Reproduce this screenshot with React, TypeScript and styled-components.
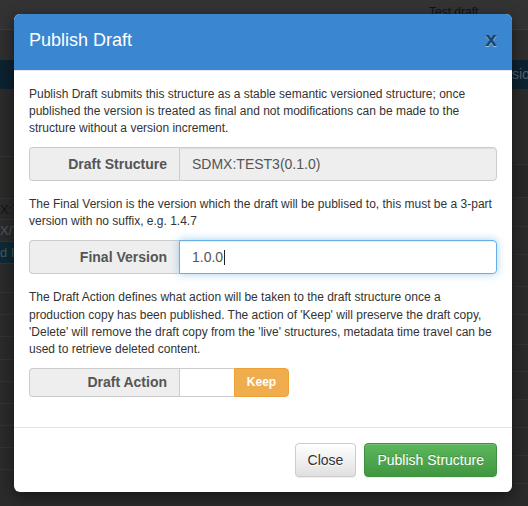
import React from "react";
import styled, { createGlobalStyle } from "styled-components";

const GlobalStyle = createGlobalStyle`
  html, body {
    margin: 0;
    padding: 0;
  }
  body {
    width: 528px;
    height: 506px;
    overflow: hidden;
    background: #2b2b2b;
    font-family: "Liberation Sans", Arial, sans-serif;
  }
  * {
    box-sizing: border-box;
  }
`;

/* ---------- page behind the dialog (already dimmed by the backdrop) ---------- */

const Page = styled.div`
  position: relative;
  width: 528px;
  height: 506px;
  overflow: hidden;
  background: #2b2b2b;
`;

const TopBar = styled.div`
  height: 30px;
  padding: 5px 0 0 429px;
  background: #333333;
  border-bottom: 1px solid #3d3d3d;
  font-size: 12px;
  color: #121212;
`;

const SubBar = styled.div`
  height: 30px;
  background: #2f2f2f;
`;

const HeadBand = styled.div`
  height: 29px;
  display: flex;
  justify-content: flex-end;
  background: #0c2230;
`;

const BandCell = styled.div`
  width: 16px;
  overflow: hidden;
  color: #52616d;
  font-size: 14px;
  line-height: 29px;
  white-space: nowrap;
`;

const Columns = styled.div`
  display: flex;
  justify-content: space-between;
`;

const Column = styled.div`
  width: 14px;
  overflow: hidden;
  display: flex;
  flex-direction: column;
`;

const BgRow = styled.div<{ $h: number; $tint?: string }>`
  height: ${(p) => p.$h}px;
  background: ${(p) => p.$tint || "transparent"};
  border-bottom: 1px solid #343434;
  display: flex;
  align-items: center;
  font-size: 13px;
  white-space: nowrap;
  overflow: hidden;
`;

const CutText = styled.span<{ $color: string; $shift: number }>`
  margin-left: ${(p) => p.$shift}px;
  color: ${(p) => p.$color};
`;

const BgBadge = styled.div`
  align-self: stretch;
  flex: 1;
  display: flex;
  align-items: center;
  background: #0f2a36;
`;

/* ---------- dialog ---------- */

const Modal = styled.div`
  position: absolute;
  top: 14px;
  left: 14px;
  width: 498px;
  background: #ffffff;
  border-radius: 6px;
  box-shadow: 0 5px 15px rgba(0, 0, 0, 0.5);
  overflow: hidden;
`;

const Header = styled.div`
  display: flex;
  justify-content: space-between;
  align-items: flex-start;
  padding: 14px 15px 16px;
  background: #3a86d0;
  border-bottom: 1px solid #e5e5e5;
`;

const Title = styled.h4`
  margin: 0;
  font-size: 18px;
  font-weight: normal;
  line-height: 1.42857;
  color: #ffffff;
`;

const CloseX = styled.button`
  padding: 0;
  border: 0;
  background: none;
  font-family: "Liberation Sans", Arial, sans-serif;
  font-size: 21px;
  font-weight: bold;
  line-height: 1;
  color: #000000;
  opacity: 0.5;
  text-shadow: 0 1px 0 #ffffff;
  cursor: pointer;
`;

const Body = styled.div`
  padding: 15px;
  font-size: 12px;
  line-height: 1.42857;
  color: #333333;
`;

const Para = styled.p`
  margin: 0 0 10px;
`;

const FormGroup = styled.div`
  display: flex;
  margin-bottom: 15px;
`;

const Addon = styled.div<{ $small?: boolean }>`
  width: 150px;
  flex: none;
  display: flex;
  align-items: center;
  justify-content: flex-end;
  padding: ${(p) => (p.$small ? "4px 12px" : "6px 12px")};
  font-size: 14px;
  font-weight: bold;
  line-height: ${(p) => (p.$small ? "19px" : "20px")};
  color: #555555;
  background: #eeeeee;
  border: 1px solid #cccccc;
  border-right: 0;
  border-radius: 4px 0 0 4px;
`;

const Field = styled.div<{ $focused?: boolean }>`
  flex: 1;
  display: flex;
  align-items: center;
  padding: 6px 12px;
  font-size: 14px;
  line-height: 20px;
  color: #555555;
  background: ${(p) => (p.$focused ? "#ffffff" : "#eeeeee")};
  border: 1px solid ${(p) => (p.$focused ? "#66afe9" : "#cccccc")};
  border-radius: 0 4px 4px 0;
  box-shadow: ${(p) =>
    p.$focused
      ? "inset 0 1px 1px rgba(0,0,0,.075), 0 0 8px rgba(102,175,233,.6)"
      : "inset 0 1px 1px rgba(0,0,0,.075)"};
`;

const Caret = styled.span`
  display: inline-block;
  width: 1px;
  height: 15px;
  margin-left: 1px;
  background: #222222;
`;

const Toggle = styled.div`
  display: flex;
  width: 110px;
  height: 29px;
`;

const ToggleBlank = styled.div`
  flex: 1;
  background: #ffffff;
  border: 1px solid #cccccc;
  border-right: 0;
`;

const ToggleKeep = styled.div`
  width: 55px;
  display: flex;
  align-items: center;
  justify-content: center;
  font-size: 12px;
  font-weight: bold;
  color: #ffffff;
  background: #f0ad4e;
  border: 1px solid #eea236;
  border-radius: 0 4px 4px 0;
`;

const Footer = styled.div`
  display: flex;
  justify-content: flex-end;
  gap: 8px;
  padding: 15px;
  border-top: 1px solid #e5e5e5;
`;

const Button = styled.button<{ $variant: "default" | "success" }>`
  height: 34px;
  padding: 6px 12px;
  font-family: "Liberation Sans", Arial, sans-serif;
  font-size: 14px;
  line-height: 20px;
  border-radius: 4px;
  cursor: pointer;
  border: 1px solid
    ${(p) => (p.$variant === "success" ? "#3e8f3e" : "#cccccc")};
  color: ${(p) => (p.$variant === "success" ? "#ffffff" : "#333333")};
  background-image: ${(p) =>
    p.$variant === "success"
      ? "linear-gradient(to bottom, #5cb85c 0, #419641 100%)"
      : "linear-gradient(to bottom, #ffffff 0, #e0e0e0 100%)"};
  text-shadow: ${(p) =>
    p.$variant === "success" ? "0 -1px 0 rgba(0,0,0,.2)" : "0 1px 0 #fff"};
  box-shadow: inset 0 1px 0 rgba(255, 255, 255, 0.15),
    0 1px 1px rgba(0, 0, 0, 0.075);
`;

type BgRowData = {
  h: number;
  tint?: string;
  text?: string;
  color?: string;
  shift?: number;
  badge?: boolean;
};

const leftRows: BgRowData[] = [
  { h: 68 },
  { h: 42, tint: "#2a2c29" },
  { h: 21, text: "SDMX:TEST3", color: "#141414", shift: -29 },
  { h: 22, text: "SDMX/TEST3", color: "#4b5663", shift: -29 },
  { h: 22, text: "Add Item", color: "#3e5a66", shift: -16, badge: true },
  { h: 29 },
  { h: 22 },
  { h: 22 },
  { h: 23 },
  { h: 22 },
  { h: 22 },
  { h: 22 },
  { h: 22 },
  { h: 22 },
];

const rightRows: BgRowData[] = [
  { h: 76 },
  { h: 33, tint: "#282828" },
  { h: 29 },
  { h: 28 },
  { h: 32 },
  { h: 28 },
  { h: 30 },
  { h: 27 },
  { h: 28 },
  { h: 28 },
  { h: 28 },
  { h: 28 },
];

const App = () => {
  return (
    <>
      <GlobalStyle />
      <Page>
        <TopBar>Test draft</TopBar>
        <SubBar />
        <HeadBand>
          <BandCell>sion</BandCell>
        </HeadBand>
        <Columns>
          <Column>
            {leftRows.map((row, index) => {
              const label = row.text && (
                <CutText $color={row.color!} $shift={row.shift!}>
                  {row.text}
                </CutText>
              );
              return (
                <BgRow key={index} $h={row.h} $tint={row.tint}>
                  {row.badge ? <BgBadge>{label}</BgBadge> : label}
                </BgRow>
              );
            })}
          </Column>
          <Column>
            {rightRows.map((row, index) => (
              <BgRow key={index} $h={row.h} $tint={row.tint} />
            ))}
          </Column>
        </Columns>

        <Modal>
          <Header>
            <Title>Publish Draft</Title>
            <CloseX>x</CloseX>
          </Header>
          <Body>
            <Para>
              Publish Draft submits this structure as a stable semantic
              versioned structure; once published the version is treated as
              final and not modifications can be made to the structure without
              a version increment.
            </Para>
            <FormGroup>
              <Addon>Draft Structure</Addon>
              <Field>SDMX:TEST3(0.1.0)</Field>
            </FormGroup>
            <Para>
              The Final Version is the version which the draft will be publised
              to, this must be a 3-part version with no suffix, e.g. 1.4.7
            </Para>
            <FormGroup>
              <Addon>Final Version</Addon>
              <Field $focused>
                1.0.0
                <Caret />
              </Field>
            </FormGroup>
            <Para>
              The Draft Action defines what action will be taken to the draft
              structure once a production copy has been published. The action
              of 'Keep' will preserve the draft copy, 'Delete' will remove the
              draft copy from the 'live' structures, metadata time travel can be
              used to retrieve deleted content.
            </Para>
            <FormGroup>
              <Addon $small>Draft Action</Addon>
              <Toggle>
                <ToggleBlank />
                <ToggleKeep>Keep</ToggleKeep>
              </Toggle>
            </FormGroup>
          </Body>
          <Footer>
            <Button $variant="default">Close</Button>
            <Button $variant="success">Publish Structure</Button>
          </Footer>
        </Modal>
      </Page>
    </>
  );
};

export default App;
